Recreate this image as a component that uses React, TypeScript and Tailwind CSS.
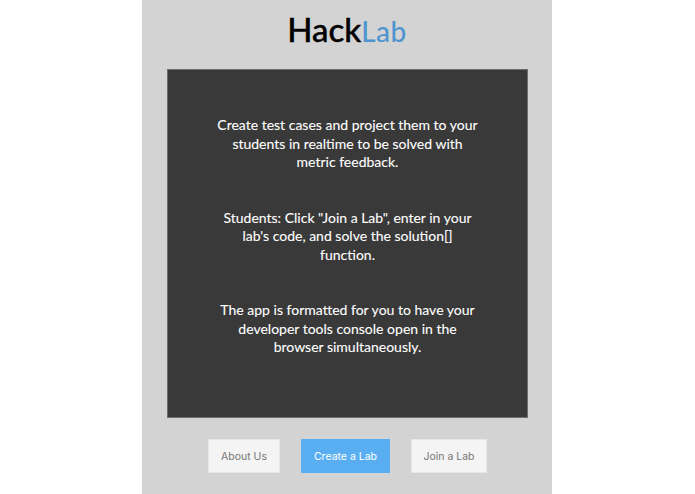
export default function App() {
  return (
    <div className="h-[494px] overflow-hidden bg-white font-['Lato',sans-serif]">
      <div className="ml-[142px] h-full w-[410px] bg-[#d3d3d3] px-[25px]">
        {/* Logo */}
        <h1 className="flex h-[69px] items-baseline justify-center pt-[9px] leading-[40px] font-medium">
          <span className="text-[33px] text-black [-webkit-text-stroke:0.4px_black]">Hack</span>
          <span className="text-[28px] tracking-[0.5px] text-[#4f93cf]">Lab</span>
        </h1>

        <div className="flex h-[349px] w-[361px] flex-col items-center gap-[37px] border border-[#6e6e6e] bg-[#393939] pt-[46px] text-center text-[14px] leading-[18.5px] text-white [-webkit-text-stroke:0.1px_white]">
          <p className="w-[264px]">Create test cases and project them to your students in realtime to be solved with metric feedback.</p>
          <p className="w-[264px]">Students: Click "Join a Lab", enter in your lab's code, and solve the solution[] function.</p>
          <p className="w-[264px]">The app is formatted for you to have your developer tools console open in the browser simultaneously.</p>
        </div>

        <div className="mt-[21px] ml-[41px] flex gap-[21px] font-['Inter',sans-serif] text-[10.5px]">
          <button className="h-[34px] w-[72px] border border-[#e8e8e8] bg-[#f4f4f4] pt-px text-[#777]">About Us</button>
          <button className="h-[34px] w-[89px] bg-[#59aef2] pt-px text-white">Create a Lab</button>
          <button className="h-[34px] w-[76px] border border-[#e8e8e8] bg-[#f4f4f4] pt-px text-[#777]">Join a Lab</button>
        </div>
      </div>
    </div>
  );
}
